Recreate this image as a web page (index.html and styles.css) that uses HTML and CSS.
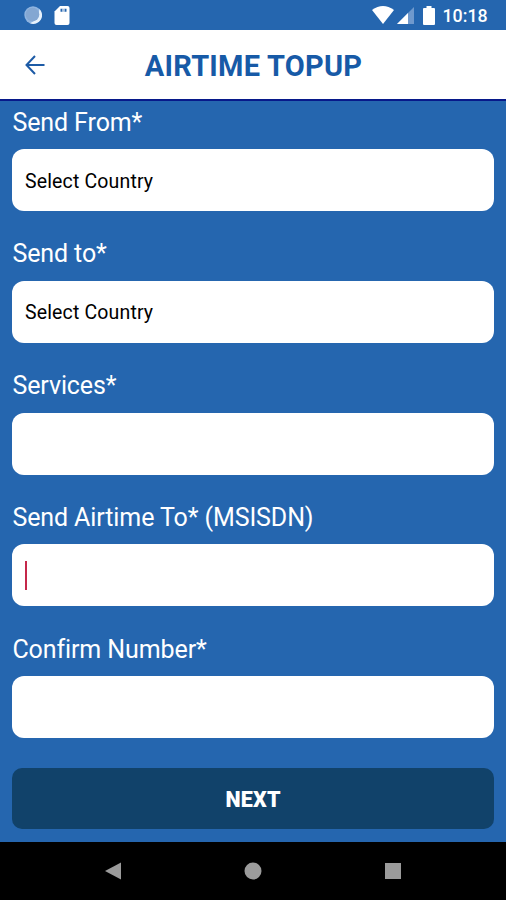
FILE: index.html
```html
<!DOCTYPE html>
<html lang="en">
<head>
<meta charset="utf-8">
<title>Airtime Topup</title>
<link rel="stylesheet" href="styles.css">
</head>
<body>
<div class="status">
  <svg class="dot" viewBox="0 0 18 18"><circle cx="9" cy="9" r="8.700" fill="#8fb4e0"/><path d="M15.500 3A8.700 8.700 0 0 1 6 17.200Q14 15 15.500 3Z" fill="#e6f1fc"/><circle cx="8.500" cy="8.500" r="6.800" fill="#84a7d2"/></svg>
  <svg class="sd" viewBox="0 0 16 19"><path d="M6 0H13.500Q15.500 0 15.500 2V17Q15.500 19 13.500 19H2.500Q.5 19 .5 17V5.500Z" fill="#fff"/><path d="M7.500 2.700v3M11.500 2.700v3" stroke="#2566af" stroke-width="2"/><path d="M9.500 2.700v3" stroke="#a9c2e0" stroke-width="2"/></svg>
  <span class="spacer"></span>
  <svg class="wifi" viewBox="0 0 22 18"><path d="M0 4Q11-4 22 4L11 18Z" fill="#fff"/></svg>
  <svg class="cell" viewBox="0 0 17 17"><path d="M17 0V17H0Z" fill="#6f99cd"/><path d="M11 6V17H0Z" fill="#fff"/></svg>
  <svg class="battery" viewBox="0 0 12 19"><path d="M3.500 0h5v2H11q1 0 1 1V18q0 1-1 1H1q-1 0-1-1V3q0-1 1-1h2.500Z" fill="#fff"/></svg>
  <span class="time">10:18</span>
</div>
<header class="bar">
  <svg class="back" viewBox="0 0 22 20"><path d="M20.500 10H3M11 1L2.500 10L11 19" fill="none" stroke="#1d5ba6" stroke-width="2"/></svg>
  <h1>AIRTIME TOPUP</h1>
</header>
<main class="form">
  <div class="group"><label>Send From*</label><div class="field">Select Country</div></div>
  <div class="group"><label>Send to*</label><div class="field">Select Country</div></div>
  <div class="group"><label>Services*</label><div class="field"></div></div>
  <div class="group"><label>Send Airtime To* (MSISDN)</label><div class="field"><span class="caret"></span></div></div>
  <div class="group"><label>Confirm Number*</label><div class="field"></div></div>
  <button class="next">NEXT</button>
</main>
<nav class="nav">
  <svg viewBox="0 0 18 18"><path d="M17 .5V17.500L1 9Z"/></svg>
  <svg viewBox="0 0 18 18"><circle cx="9" cy="9" r="8.500"/></svg>
  <svg viewBox="0 0 18 18"><path d="M1 1H17V17H1Z"/></svg>
</nav>
</body>
</html>
```
FILE: styles.css
```css
* { box-sizing: border-box; }
body { margin: 0; width: 506px; height: 900px; overflow: hidden; display: flex; flex-direction: column; background: #2566af; font-family: Roboto, "Liberation Sans", sans-serif; }
svg { display: block; flex: none; }
.status { height: 30px; flex: none; display: flex; align-items: center; padding: 0 18.500px 0 24px; color: #fff; }
.dot { width: 18px; height: 18px; }
.sd { width: 16px; height: 19px; margin-left: 12px; }
.spacer { flex: 1; }
.wifi { width: 22px; height: 18px; }
.cell { width: 17px; height: 17px; margin: 1px 0 0 3px; }
.battery { width: 12px; height: 19px; margin-left: 9px; }
.time { width: 45px; margin: 2px 0 0 8px; font-size: 17.800px; font-weight: 500; line-height: 30px; white-space: nowrap; }
.bar { height: 71px; flex: none; display: grid; grid-template-columns: 48px 1fr 48px; align-items: center; background: #fff; border-bottom: 2px solid #07198a; }
.back { width: 22px; height: 20px; margin-left: 24px; }
h1 { margin: 3px 0 0 1px; text-align: center; font-size: 29px; font-weight: 700; letter-spacing: .25px; line-height: 36px; color: #175aa7; white-space: nowrap; }
.form { flex: 1; padding: 3.800px 12px 0 12.400px; display: flex; flex-direction: column; }
.group { height: 131.700px; flex: none; }
label { display: block; height: 44.500px; line-height: 36px; font-size: 25px; letter-spacing: -.1px; color: #fff; white-space: nowrap; }
.field { height: 62px; display: flex; align-items: center; padding: 2px 12.600px 0; border-radius: 12px; background: #fff; color: #000; font-size: 19.500px; letter-spacing: .15px; }
.caret { width: 2px; height: 29px; margin-top: -2px; background: #c5284a; }
.next { height: 61px; margin: 5px 0 0; padding: 2px 0 0; border: 0; border-radius: 10px; background: #11426a; color: #fff; font: 900 21.500px Roboto, sans-serif; letter-spacing: .2px; }
.nav { height: 58px; flex: none; display: flex; justify-content: space-between; align-items: center; padding: 0 104px; background: #000; }
.nav svg { width: 18px; height: 18px; fill: #9b9b9b; }
```
